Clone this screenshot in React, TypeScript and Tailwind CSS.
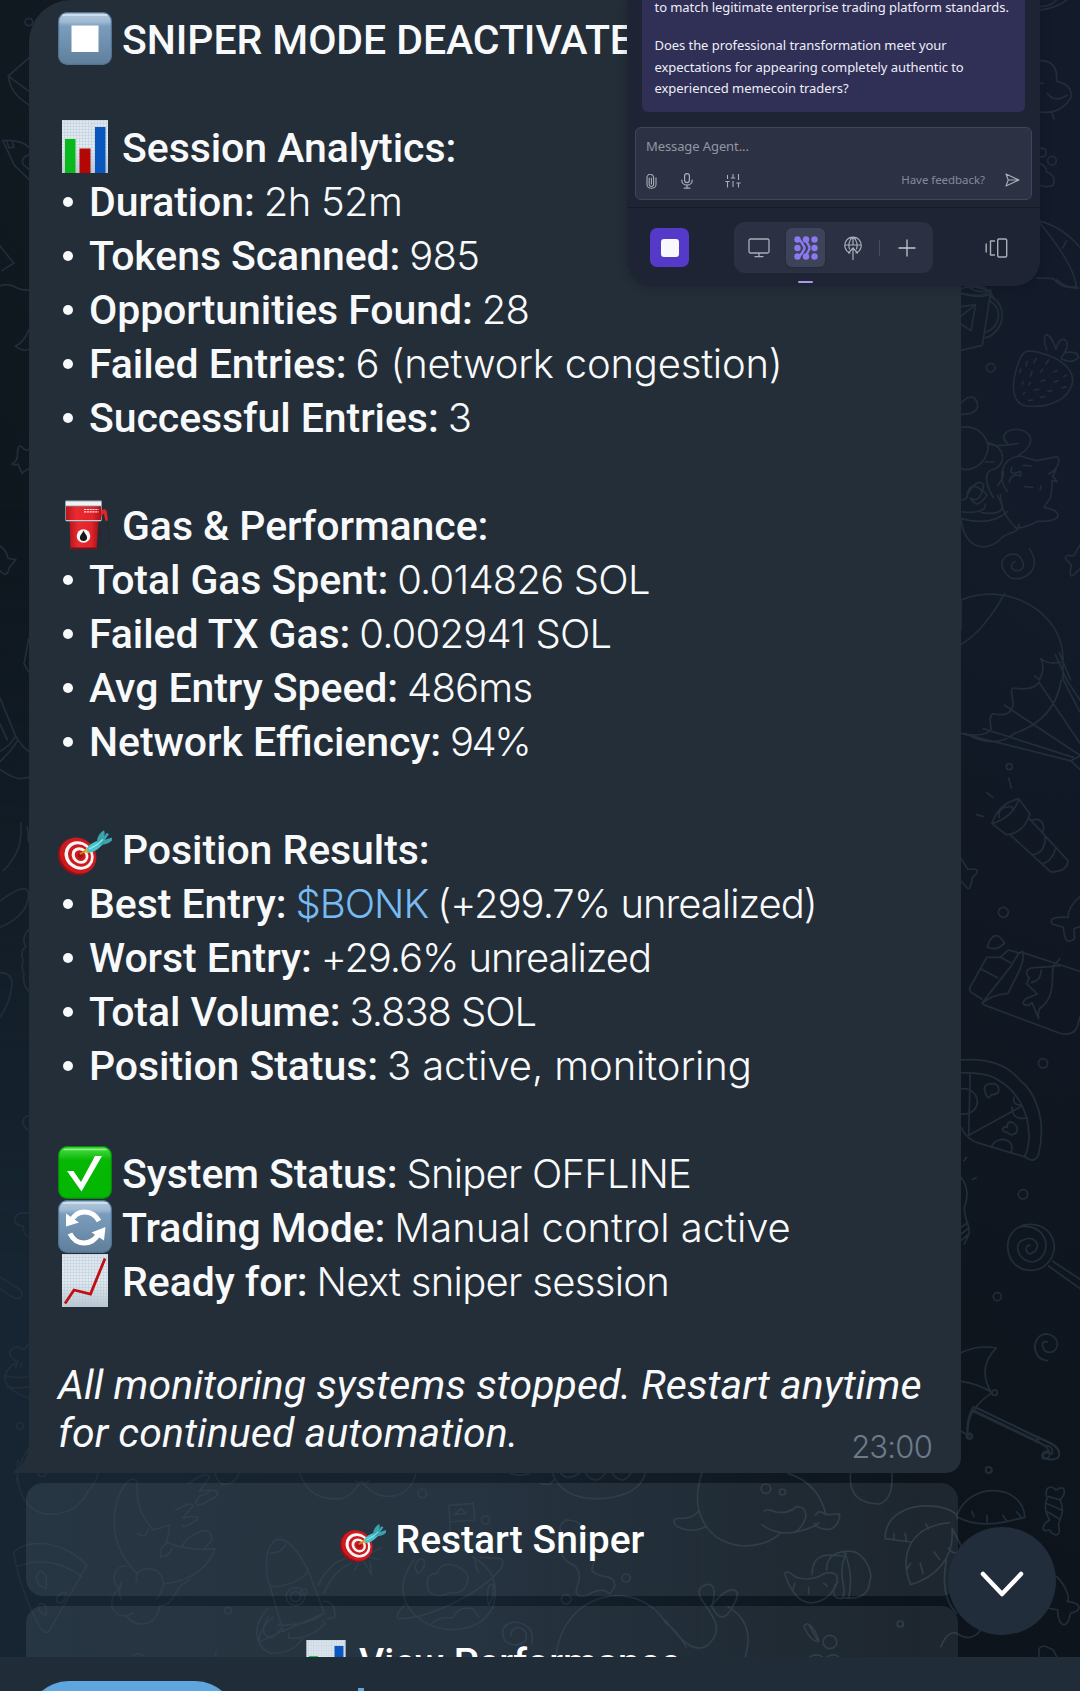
import React from "react";

type Emoji = "stop" | "bars" | "fuel" | "dart" | "check" | "cycle" | "trend";

function EmojiIcon({ kind, className }: { kind: Emoji; className: string }) {
  return (
    <svg viewBox="0 0 54 53" preserveAspectRatio="none" className={className}>
      <defs>
        <linearGradient id="keyBlue" x1="0" y1="0" x2="0" y2="1">
          <stop offset="0" stopColor="#b4cadd" />
          <stop offset="0.18" stopColor="#9db9d2" />
          <stop offset="0.26" stopColor="#7b9dbd" />
          <stop offset="1" stopColor="#5f7f9b" />
        </linearGradient>
        <linearGradient id="keyGreen" x1="0" y1="0" x2="0" y2="1">
          <stop offset="0" stopColor="#4fdf4a" />
          <stop offset="0.18" stopColor="#1fc51c" />
          <stop offset="0.26" stopColor="#06b804" />
          <stop offset="1" stopColor="#02b602" />
        </linearGradient>
        <linearGradient id="paper" x1="0" y1="0" x2="0" y2="1">
          <stop offset="0" stopColor="#dde6ee" />
          <stop offset="0.5" stopColor="#e3eaf1" />
          <stop offset="1" stopColor="#bcc8d2" />
        </linearGradient>
        <pattern id="paperGrid" width="3" height="3" patternUnits="userSpaceOnUse">
          <path d="M0 .5h3M.5 0v3" stroke="#b4c6d6" strokeWidth=".4" />
        </pattern>
        <linearGradient id="pump" x1="0" y1="0" x2="1" y2="0">
          <stop offset="0" stopColor="#b4151c" />
          <stop offset="0.3" stopColor="#ea2a31" />
          <stop offset="0.75" stopColor="#e3232a" />
          <stop offset="1" stopColor="#a91118" />
        </linearGradient>
      </defs>
      {kind === "stop" && (
        <>
          <rect x=".6" y=".6" width="52.8" height="51.8" rx="8.5" fill="url(#keyBlue)" stroke="#4f7393" strokeWidth="1.2" />
          <path d="M5 3h44" stroke="#d6e3ee" strokeWidth="1.5" strokeLinecap="round" />
          <rect x="13.5" y="13.5" width="27" height="26.5" fill="#fff" />
        </>
      )}
      {kind === "check" && (
        <>
          <rect x=".6" y=".6" width="52.8" height="51.8" rx="8.5" fill="url(#keyGreen)" stroke="#078a0a" strokeWidth="1.2" />
          <path d="M6 3.5h42" stroke="#8ff088" strokeWidth="1.4" strokeLinecap="round" />
          <path d="M9 25h6.500l7.500 11 14-26h7L23.500 45.500z" fill="#fff" />
        </>
      )}
      {kind === "cycle" && (
        <>
          <rect x=".6" y=".6" width="52.8" height="51.8" rx="8.5" fill="url(#keyBlue)" stroke="#4f7393" strokeWidth="1.2" />
          <path d="M5 3h44" stroke="#d6e3ee" strokeWidth="1.5" strokeLinecap="round" />
          <path d="M13.500 20.500C19 9 34.500 9 41 21M12 33.500C18 46 34 46.500 41 33" fill="none" stroke="#fff" strokeWidth="5" />
          <path d="M8 13.500v13l13-4zM47.500 27l-14 5.500 12.500 8z" fill="#fff" />
        </>
      )}
      {kind === "bars" && (
        <>
          <rect x="4" y="0" width="46" height="53" fill="url(#paper)" />
          <rect x="4" y="0" width="46" height="53" fill="url(#paperGrid)" />
          <rect x="7" y="19" width="10.500" height="34" fill="#08b91b" />
          <rect x="21.500" y="28.500" width="11" height="24.500" fill="#b50606" />
          <rect x="37" y="7" width="10.500" height="46" fill="#0757be" />
        </>
      )}
      {kind === "trend" && (
        <>
          <rect x="4" y="0" width="46" height="53" fill="url(#paper)" />
          <rect x="4" y="0" width="46" height="53" fill="url(#paperGrid)" />
          <path d="M7 49.500 16 36l16.500 4L47 4.500" fill="none" stroke="#bf0f12" strokeWidth="2.800" />
        </>
      )}
      {kind === "fuel" && (
        <>
          <path d="M11.500 22h29l-2 30h-26z" fill="url(#pump)" />
          <path d="M12.500 49.500h26.200l-.2 2.500h-26z" fill="#5f1a20" />
          <rect x="7.500" y="3" width="36" height="20" rx="1" fill="url(#pump)" stroke="#8b959e" strokeWidth=".9" />
          <path d="M7.500 3h36v5h-36z" fill="#eef2f4" stroke="#8b959e" strokeWidth=".8" />
          <path d="M8 22.500h35" stroke="#c3c9cd" strokeWidth="1" />
          <path d="M26 11.500h14.500M26 13.800h14.500" stroke="#fbdcdc" strokeWidth="1.200" strokeDasharray="2.200 .6" />
          <path d="M43 13c3-3 5.500-2 6 1.500l.8 8-2.300.5-1.700-7.500L43 19z" fill="#e3232a" />
          <path d="M43.500 23c-2 8-.8 17-.3 21 .6 4 7.500 4 8-2 .4-6-1.500-13-2.400-18" fill="none" stroke="#2b2428" strokeWidth=".9" />
          <circle cx="25.500" cy="38" r="6.800" fill="#f7f7f7" />
          <path d="M25.500 32.500c1 3 3.600 4.600 3.600 7.100a3.600 3.400 0 0 1-7.200 0c0-2.500 2.600-4.100 3.600-7.100z" fill="#15171a" />
        </>
      )}
      {kind === "dart" && (
        <>
          <g transform="rotate(40 19 34)">
            <ellipse cx="19" cy="35" rx="19.500" ry="17.500" fill="#8e1116" />
            <ellipse cx="19.500" cy="33" rx="19.200" ry="17" fill="#cd1a20" />
            <ellipse cx="20.300" cy="32.300" rx="15.300" ry="13.500" fill="#f8f5f5" />
            <ellipse cx="20.600" cy="32" rx="12" ry="10.600" fill="#cd1a20" />
            <ellipse cx="21" cy="31.700" rx="8.900" ry="7.800" fill="#f8f5f5" />
            <ellipse cx="21.200" cy="31.600" rx="5.800" ry="5" fill="#cd1a20" />
            <ellipse cx="21.200" cy="31.600" rx="2.800" ry="2.400" fill="#a21217" />
          </g>
          <g transform="translate(0 7.500) scale(1 .9)">
            <path d="M22.500 27 30 22" stroke="#c8871c" strokeWidth="2" strokeLinecap="round" />
            <path d="M28.500 20c-1.500 2.500-1.500 4.500-1 6 3 .3 5-.5 6-1.500z" fill="#e6b422" />
            <path d="M29 21c1-4 7-7 12-9l4 4c-4 5-9 9.500-13.500 9.500-2 0-3-2-2.500-4.500z" fill="#46c3cd" />
            <path d="M39 14C39 8 42 3.500 46 .8c1 2.500.8 5 .2 7l2.300-4c1 .3 2 .6 2.500 1.500l-4 6 6.500-2.500c.6 1 .6 2.200.5 3.500-4 4-8.500 5-13 4.500z" fill="#3aa3ab" />
            <path d="M31 22c4-2 9-5 14-11" stroke="#8fe6ea" strokeWidth="1.300" fill="none" />
          </g>
        </>
      )}
    </svg>
  );
}

function Wallpaper() {
  return (
    <div className="absolute inset-0 bg-[linear-gradient(90deg,#101820_0%,#131c28_50%,#131a29_100%)]">
      <div className="absolute inset-0 bg-[linear-gradient(200deg,rgba(13,20,27,0)_25%,rgba(13,20,27,1)_75%)]" />
      <div className="absolute inset-0 bg-[linear-gradient(90deg,#172532_0%,#16222e_45%,rgba(13,20,27,0)_85%)] [mask-image:linear-gradient(180deg,transparent_30%,black_75%)]" />
      <svg width="1080" height="1691" viewBox="0 0 1080 1691" className="absolute inset-0 fill-none stroke-[#212e3a] [&_circle]:[vector-effect:non-scaling-stroke] [&_path]:[vector-effect:non-scaling-stroke]" strokeWidth="1.7" strokeLinecap="round" strokeLinejoin="round">
        <g transform="scale(.3444 .3333)">
          <circle cx="84" cy="66" r="11" />
          <path d="M84 174 24 228q6 54 60 86M24 228l60 46M8 422q50-5 76 20M8 422l34 74 42 42M84 464q-26 10-16 30l16 14M0 738l40 52-34 22M0 858q24-10 50 6 18 8 34 6M20 424l6 20 14-2-4-16" />
        </g>
        <g transform="translate(0 270) scale(.3333 .5676)">
          <path d="M46 134q26-6 40-28M46 134q20 10 40 6M36 342q14-6 16-12 0-26 14-18 10 8 20 4M36 342q14 2 18 0l12 16 20-8M0 486q20 8 24 22l24 2-20 14q-6 20-28 6M86 650 72 694l14 14M0 754l46 66q20 20 40 28M0 800l22 28M0 848q30-10 46-26M0 866q30-16 52-36M0 880q40 16 60 16l26-2M62 974q10 50-52 84M82 982l4 26M0 1112q86-38 86-10-4 36-86 56M86 1162q-24 16-8 30-20 8-8 24-8 12 2 24-6 18 14 30M0 1238q36 0 36 20-4 32-36 58M86 1490q-26 4-12 20l12 6" />
        </g>
        <g transform="translate(0 1130) scale(.3444 .3333)">
          <path d="M84 250q-40-6-42 20 4 18 26 18-2 28 16 32M0 442l60 38q10 18-6 26-16 0-54-30M84 640l-14 20q-24-20-42 4-2 20 24 32-40 20-38 54 14 36 70 54M18 738q40 10 66 0M20 770q34 8 64 0M50 700l-4 12M64 698l-4 12M84 954q-30 40-36 100" />
          <circle cx="58" cy="888" r="10" />
        </g>
        <g transform="translate(0 1460) scale(.3444 .3333)">
          <path d="M52 0q-12 130 70 160 90 14 130-60 40-50 30-70M108 34q2 16 14 16t14-16M332 200c-4-60 20-128 48-142 20-4 20 10 18 26 0 50 10 80 46 126l50-16-10 54 36 12q60 12 104 6-30 90-148 106M398 340q-60-60-66-140M400 220q20 20 30-12M484 248l-18 20v24q30-6 34-28M528 262q10-30 60-50 30 0 26 30l-20 22M398 366c-20-50 80-60 76 10-4 20-8 28-18 40M366 318c-40 0-44 50-20 66-40 40-20 86 20 84 30 40 90 30 98-30 30 0 40-30 60-60l26-18M352 368q-10 30 0 50M372 466l14-6M548 70c40-30 60-30 60-16l-30 40c60-12 70 10 30 26-40 30-50 10-30-10l30-14M510 150q50-30 50-10l-30 34q60-10 40 6-40 30-40 14M624 40q10 40 40 32 20-8 30-32M40 278q20-30 90-28 80 16 122 66L150 500q-10 30-30 8Q60 400 40 278zM48 320q100-40 190 30M106 350q10-30 28 0v36q-28-10-28-36zM164 426q0-30 28-28-4 40-28 28zM110 440q10-20 24 0v24q-20-4-24-24z" />
          <path d="M776 350q-10-90 26-110 40-14 92 90l48 130-120 54zM786 278q30 4 44-26M784 380q70 0 110-44M806 496q90 0 132-34M818 514q-40 20-60 30l-6-8q10-40 40-64M838 520v14q60 6 106-44l-8-10M940 424q36 0 32 48l-20 4M780 444c-60 60-30 130 10 136q60 0 88-44M780 470q-30 50 0 60l10 4 28-30M924 376q30-70 90-84M940 400q30-70 80-90M870 40c20 60 60 80 120 76 30-4 50-40 60-52 40 60 120 60 150 0l8-24M1032 64q20 10 40 0M1304 136l70-6 4 50-72 6M1304 136l4 100M1320 164l18-18 16 14zM1202 300q-60 80-10 150c60 80 200 80 240-10 20-80-10-120-60-150M1240 370q0-30 30-30 10-40 60-20 40 20 24 54-10 30-50 24-30 20-60-4zM1204 320q10-30 28-20 4 30-20 40zM1380 294q0 30 10 44M1180 430q-40 40-20 46 80 0 200-70 120-80 96-110l-60-4M1420 376q-10 40 0 60l12-30v-34zM1254 490q20-20 60-16 20-40 60-26l16 24M1000 270q20-50 60-50M1110 262l-50 26 40 10M1030 330l10-20q10-20 20 0l20 36-6-40" />
          <path d="M1544 552q10-60-50-66-50 10-28 56 30 26 60 0 10-34-24-40-20 4-18 26M1480 40l26 6 30-4M388 586q14-10 28 2M624 586l4-6" />
          <circle cx="1226" cy="100" r="13" /><circle cx="1410" cy="180" r="12" /><circle cx="662" cy="452" r="10" />
          <circle cx="858" cy="410" r="27" /><circle cx="858" cy="410" r="15" /><circle cx="882" cy="396" r="9" />
        </g>
        <g transform="translate(540 1400) scale(.3444 .3333)">
          <path d="M36 220q30 80 140 76 110-6 130-76M60 220q20 24 54 0M132 220q28 40 58 0M210 220q28 40 54 0M0 250q30 10 40-10M470 220c-40 120 20 210 120 218q70 0 110-40M720 220q90 30 110 124M460 334q-20 26-60 20-20 6-4 24 40 24 86 2M650 334q10-10 34 2 40 6 60-16 30 0 28 30-8 30-30 46M644 374q40 30 86 24 60-10 80-30M800 346q10-20 30-2l40-2q0 36-30 46-30 2-44-18M902 220q-10 90 84 92 40-14 36-92M66 400q-20-20 10-40 50 0 50 40l30 14M60 440q0 40 40 56 20 20 12 50-20 50 20 42 50-30 70-6 30-30 0-50-60-10-50-30l10-30M46 770c20-200 240-240 320-100q30 20 58 70M364 660q90 130 136 60c50-60-70-130-30-160 40-24 40 20 30 56 50-70 90-50 66-10-40 90-60 20-70 10M546 620q80 50 50 150M710 520q10-10 30 10 30 14 70 0 30-20 50-6 14 30-30 70-80 50-120-74M790 524c0-70 50-60 90-56M832 510c0-50 40-54 56-56 60-10 80 80 70 84 0 60-50 60-80 54M888 460c-30 70 10 110-12 136-40 0-20-50-10-50M882 456q30 60 14 140M740 550l-6 20M780 562v20M824 550l10 8" />
          <path d="M1002 416c0-130 210-110 210-60M1002 416l76 10M1190 368c-110 10-150 90-114 186 70-20 130-80 120-170l30 60q-20 30-40 0M1120 372l8 14M1060 400l4 24M1028 400v16M1076 490l-12 20M1104 490l8 30M1144 456l16 22M1212 342c40-100 190-90 196 10l-50 12q-90 20-144-12M1254 334l6 16M1298 346v20M1344 346l10 16M1384 336l12 14M1180 480q-20 110 30 160M1164 740q20-50 46-40 40 30 70-10M1500 530c30 30 40 70 30 74 50 6 40 30 10 36-10 60-40 30-36-10l-30-6M1450 770q-10-50 40-20l10 20M1256 24q-20 40-14 80M1258 20l220 106q40 20 26 46-20 16-44 0 0-20 26-10 8-24-22-26L1256 34M1440 126l6-14M1472 296c-10-40 16-40 26-26 30-20 30 10 12 30 20 40-10 70-4 76 10 50-30 20-26 14-30 10-20-20 0-30-20-30-10-60-8-64zM1476 290l36 10M1470 310l44 20M1470 334l40 24M766 680q10-20 30 10 20 40 10 34-20 0-40-44zM780 674l24 44M784 770q20-10 36 0M834 770q20-10 32 0" />
          <circle cx="656" cy="266" r="14" /><circle cx="704" cy="276" r="9" /><circle cx="250" cy="534" r="12" /><circle cx="76" cy="598" r="14" />
          <circle cx="842" cy="726" r="20" /><circle cx="1046" cy="672" r="9" /><circle cx="1303" cy="210" r="9" /><circle cx="1246" cy="108" r="8" />
        </g>
        <g transform="translate(620) scale(.3333)">
          <path d="M1260 30q50-6 80-30M1260 20q30 0 50-20M1260 182q50 0 50 50v12q50 10 42 50-30 50-92 42M1282 280q20 30 60 6M1296 338l6 18M1260 250h10M1260 446q20-6 18 16-2 10-18 8M1260 490q20 10 20 26 30 10 20 40-20 8-40 0M1262 664q70 20 118 78M1260 670q100 120 110 190-40 10-70-24l-50-2M1340 722l-12 22M1024 866c30-14 70-10 86 10l14 22M1024 880q60 20 90 0M1040 860q40 0 70 16" />
          <circle cx="1296" cy="482" r="13" />
        </g>
        <g transform="translate(940 280) scale(.3333)">
          <path d="M63 40q70 16 90-10l-26 166-64 15M63 80l44-6-14 78-30-20M63 108l44-34M84 20q30 24 68 10M150 48c60 30 40 110-14 126M150 64c40 20 30 80-12 92M63 370q20-26 40-16 24 30-10 46l-30 4M63 442c60-10 80 40 82 62-10 60-60 70-82 62M145 488c50 10 60 66 10 82-30 10-10 60 6 84M136 546h26M146 492q20 10 90-2M202 490c-40-40 50-60 68-20q10 30-34 56M202 634c-30-40-20-100 38-106l50 14 50-10q20-6 16 14-2 20-30 36l22-12-10 20 14 14-16-2v22l-4 28-20 30q50 10 40 30-10 14-60 12-40 22-64 20-50-50-46-100M174 616q20-30 16-40M216 562q-10 20 8 18l18-6v14q-30-10-34 20M250 556l24 2M254 620l24 2M300 630l4-12M63 716q90 24 140-22M63 716c10 90 70 100 114 66 20-30 60-16 60-50M68 696q70 6 68-24M124 698q70 10 62-26l-14-26M63 660q20 0 20-18 30-50 48-28-10 60-40 40 20 40 50-10-50-50-60 0M268 806c40 60-10 100-56 88-50-40-20-80 20-70 30 26 20 50-6 48-20-10-10-24 0-28M420 796l-20 32q-30-6-22 10l16 16q-10 50 12 26l14-14M63 960c140-60 310 40 306 180v60M194 940q-60 110-131 154M284 1188l14 12q20-40 4-64 26 20 60 10M346 1124l34 76M358 1118l34 82M63 960v90" />
          <path d="M350 0q30 26 66 24" />
          <circle cx="152" cy="263" r="13" />
          <path d="M260 214c40-4 140 30 138 90-10 60-80 80-140 74-50-10-40-80-26-120q10-36 28-44zM320 210c-20-60 10-60 28-2 10-50 50-30 26 10l-10 16M374 218q40-6 42 14-20 20-50 6M262 244l-4 14M288 236l-6 12M326 240l-8 12M242 268l-2 10M276 274l-4 14M308 268l-6 8M352 272l-12 4M248 304v8M272 308l-6 6M314 300l-10 4M354 302l-12 4M378 286l-6 4M254 338l-4 4M296 328l-14 2M336 332l-12 2M378 320l-12 4M278 360l-12 2M314 350l-12 2" />
        </g>
        <g transform="translate(940 680) scale(.3333)">
          <path d="M63 160 390 242M74 160q90 50 150 0 120-40 140-160M76 162q60 10 78-14-10-50 10-46 50 10 56-30-10-50 0-48 60 10 78-18M130 146l270 86M194 76l226 150M298 8 420 190M370 0l50 96M380 0l40 60M392 242l28-14M394 244l26 24M206 294l8 30M140 338l18 14M110 404l20 6M156 430q20-60 80-74l34 46q-20 60-72 62zM160 430q60-20 76-72M178 412c-10-30 40-40 40-26M210 464l122 112q50 0 52-34L268 416M276 420c30-10 40 20 32 36M316 468q0 50-36 56M346 508q-10 36-36 42M63 536q14 20 20 32 50-6 14 24-6 50-20 26l-14-14M420 650q-36 30-36 62-60-4-48 20l34 10q4 60 34 34l-2-30 18-6M142 802q10-40 34-34l18 20q-20 26-52 14zM140 832l-52 94 4 10 34 22M140 832h40l26-22 34 10M182 832l30 16M124 868l50 26M126 970l34-44 52-66 24-40 12-6M126 970q30-26 78-30l30-60q20-40 14-60M130 974l230 86q40 10 52-20l8-30M248 818l172 56M358 858l-84 6q-26 10-6 30l-8 18 32 30-34 14q-20 20 8 20l10-8 20 48q-4-30 10-36c50-40 20-120 40-130q10-8 14-14M274 908q30-6 30-38M63 1140q120-10 176 60M63 1178q80 0 112 22M90 1178v22" />
          <circle cx="208" cy="260" r="9" /><circle cx="190" cy="697" r="15" /><circle cx="309" cy="1150" r="14" />
        </g>
        <g transform="translate(940 1080) scale(.3333)">
          <path d="M90 0l-4 166 160-88M63 142q20 40 56 48l140 42q20 20 36-6c30-120-20-200-56-226M174 0c90 50 110 170 80 230M63 26c60-6 70 80 0 76M246 76q-30 0-24-24M216 82q0 40 46 32M156 196c20-30 70-20 58 18M140 14q30-10 36 10 4 20-22 20-10 20-18-6-6-20 4-24zM202 132c10-14 30 0 30 20-10 20-30 10-28 6-30-4-10-24-2-16zM72 242l8-10M98 298l10-4M63 292q30 40 10 90c0 40 20 60 14 80l-14 30M63 442l20-14M63 462l24-18M63 482l24-20M338 544l82 54M326 558l94 68M203 500c0-90 140-90 140 4-10 90-136 90-140-4zM240 440c90-10 100 90 40 106-50 0-60-60-30-66 40-20 60 30 20 42-20-8-10-30 0-26M322 842c-50-4-50-80 0-80 50 10 30 70-6 52-20-30 0-30 6-28M63 818q50-24 106-14-60 60-14 136M63 904q50 6 94 34-80 50-74 130M63 1054l26 14M100 990l190 92q50 26 36 50-14 10-20 0M108 982l186 92q80 30 60 60-30 10-48-6 0-16 20-14M292 1084l6-12" />
          <circle cx="249" cy="343" r="14" /><circle cx="172" cy="650" r="12" /><circle cx="164" cy="938" r="8" /><circle cx="89" cy="1069" r="8" /><circle cx="146" cy="1170" r="9" />
        </g>
      </svg>
    </div>
  );
}

type Line = null | { icon?: Emoji; label: string; link?: string; value?: string; tracking?: string };

const report: Line[] = [
  { icon: "stop", label: "SNIPER MODE DEACTIVATED" },
  null,
  { icon: "bars", label: "Session Analytics:" },
  { label: "Duration:", value: "2h 52m", tracking: "tracking-[-0.7px]" },
  { label: "Tokens Scanned:", value: "985", tracking: "tracking-[-0.8px]" },
  { label: "Opportunities Found:", value: "28", tracking: "tracking-[-0.8px]" },
  { label: "Failed Entries:", value: "6 (network congestion)", tracking: "tracking-[-0.2px]" },
  { label: "Successful Entries:", value: "3", tracking: "tracking-[-0.5px]" },
  null,
  { icon: "fuel", label: "Gas & Performance:" },
  { label: "Total Gas Spent:", value: "0.014826 SOL", tracking: "tracking-[-0.8px]" },
  { label: "Failed TX Gas:", value: "0.002941 SOL", tracking: "tracking-[-0.8px]" },
  { label: "Avg Entry Speed:", value: "486ms", tracking: "tracking-[-0.8px]" },
  { label: "Network Efficiency:", value: "94%", tracking: "tracking-[-2.5px]" },
  null,
  { icon: "dart", label: "Position Results:" },
  { label: "Best Entry:", link: "$BONK", value: "(+299.7% unrealized)", tracking: "tracking-[-1px]" },
  { label: "Worst Entry:", value: "+29.6% unrealized", tracking: "tracking-[-1.1px]" },
  { label: "Total Volume:", value: "3.838 SOL", tracking: "tracking-[-1.1px]" },
  { label: "Position Status:", value: "3 active, monitoring", tracking: "tracking-[-0.1px]" },
  null,
  { icon: "check", label: "System Status:", value: "Sniper OFFLINE", tracking: "tracking-[-0.8px]" },
  { icon: "cycle", label: "Trading Mode:", value: "Manual control active", tracking: "tracking-[-0.05px]" },
  { icon: "trend", label: "Ready for:", value: "Next sniper session", tracking: "tracking-[-0.7px]" },
  null,
];

function ReportLine({ line }: { line: Line }) {
  if (!line) return <div className="h-[54px]" />;
  return (
    <div className="flex h-[54px] items-center whitespace-pre">
      {line.icon ? (
        <EmojiIcon kind={line.icon} className="-mt-[3px] mr-[10px] h-[53px] w-[54px] shrink-0" />
      ) : (
        <span className="mr-[16px] ml-[5px] size-[10px] shrink-0 rounded-full bg-[#f8f9fa]" />
      )}
      <span className="text-[41px] leading-[54px] font-medium tracking-[-0.07px] [font-feature-settings:'liga'_1]">{line.label}</span>
      {line.link && (
        <span className="ml-[9px] font-['Inter',sans-serif] text-[40px] leading-[54px] font-light tracking-[-1px] text-[#77bbf2]">{line.link}</span>
      )}
      {line.value && (
        <span className={"ml-[9px] font-['Inter',sans-serif] text-[40px] leading-[54px] font-light " + line.tracking}>{line.value}</span>
      )}
    </div>
  );
}

function MessageBubble() {
  return (
    <div className="relative ml-[29px] h-[1473px] w-[932px] shrink-0 rounded-tl-[42px] rounded-br-[15px] bg-[#232e39] px-[29px] pt-[13px]">
      <svg width="16" height="24" viewBox="0 0 16 24" className="absolute bottom-0 -left-[15px]">
        <path d="M16 0v24H1c-1.500 0-1.500-2 0-3C8 17 13 10 14 0z" fill="#232e39" />
      </svg>
      {report.map((line, i) => (
        <ReportLine key={i} line={line} />
      ))}
      <p className="-mt-[2px] text-[41px] leading-[48px] tracking-[0.06px] whitespace-nowrap italic">
        All monitoring systems stopped. Restart anytime
      </p>
      <div className="flex items-start justify-between">
        <p className="text-[41px] leading-[48px] tracking-[0.06px] whitespace-nowrap italic">for continued automation.</p>
        <span className="mt-[18px] font-['Inter',sans-serif] text-[31px] leading-[40px] font-light tracking-[-0.8px] text-[#6d7b89]">23:00</span>
      </div>
    </div>
  );
}

function ActionButton({ icon, label }: { icon: Emoji; label: string }) {
  return (
    <div className="flex h-[113px] shrink-0 items-center justify-center gap-[10px] rounded-[17px] bg-[#93a7b8]/13">
      <EmojiIcon kind={icon} className="h-[45px] w-[46px]" />
      <span className="text-[39px] leading-[46px] font-medium text-white">{label}</span>
    </div>
  );
}

const gray = "fill-none stroke-[#a9aeb8]";

function AgentPanel() {
  return (
    <div className="absolute top-0 left-[627px] flex h-[286px] w-[413px] flex-col overflow-hidden rounded-b-[26px] bg-[#1e2433] font-['Noto_Sans',sans-serif] shadow-[0_2px_10px_rgba(10,14,22,0.25)]">
      <div className="mr-[15px] ml-[15px] h-[112px] shrink-0 rounded-b-[6px] bg-[#302f56] pl-[12.500px] text-[13px] leading-[21.8px] tracking-[-0.06px] whitespace-nowrap text-[#eeeef6]">
        <p className="-mt-[3px]">to match legitimate enterprise trading platform standards.</p>
        <p className="mt-[16px]">
          Does the professional transformation meet your
          <br />
          expectations for appearing completely authentic to
          <br />
          experienced memecoin traders?
        </p>
      </div>
      <div className="mx-2 mt-[15px] flex h-[73px] shrink-0 flex-col justify-between rounded-[6px] border border-[#40455a] bg-[#2c3144] px-[10px] pt-[8px] pb-[8px]">
        <p className="text-[13px] leading-5 tracking-[-0.1px] text-[#9297a2]">Message Agent...</p>
        <div className="flex h-[20px] items-center">
          <svg width="11" height="15" viewBox="0 0 11 15" className={gray} strokeWidth="1.100" strokeLinecap="round">
            <path d="M3.200 4v6.300a2.200 2.200 0 0 0 4.400 0V3.600a3.300 3.300 0 0 0-6.600 0v6.900c0 5 9 5 9 0V3.800M5.400 4v6" />
          </svg>
          <svg width="12" height="16" viewBox="0 0 12 16" className={gray + " ml-[24px]"} strokeWidth="1.200" strokeLinecap="round">
            <rect x="3.600" y=".7" width="4.800" height="9" rx="2.400" />
            <path d="M.8 7.200c.2 6.500 10.200 6.500 10.400 0M6 12.200V15M3.200 15.200h5.600" />
          </svg>
          <svg width="16" height="14" viewBox="0 0 16 14" className={gray + " ml-[32px]"} strokeWidth="1.100">
            <path d="M2.500 1v4M.3 7.500h4.400M2.500 7.500v6M8 0v4M5.800 4h4.400M8 7v6M13.500 0v6M13.500 9v4.500M11.300 9h4.400" />
          </svg>
          <span className="ml-auto -translate-y-px text-[11.5px] leading-4 tracking-[-0.05px] text-[#868b99]">Have feedback?</span>
          <svg width="15" height="14" viewBox="0 0 15 14" className={gray + " mr-[1px] ml-[20px] -translate-y-px"} strokeWidth="1.100" strokeLinejoin="round">
            <path d="M1 1l13 6L1 13l2.200-6zM3.200 7H14" />
          </svg>
        </div>
      </div>
      <div className="mt-[7px] h-px w-full shrink-0 bg-[#161b26]" />
      <div className="flex h-[79px] shrink-0 items-center pr-[32px] pl-[23px]">
        <div className="flex size-[39px] items-center justify-center rounded-[7px] bg-[#5539c9]">
          <div className="size-[18px] rounded-[3px] bg-[#f8f9fd]" />
        </div>
        <div className="ml-[45px] flex h-[51px] w-[199px] items-center rounded-[11px] bg-[#2b3043] pl-[14px]">
          <svg width="22" height="20" viewBox="0 0 22 20" className={gray} strokeWidth="1.300" strokeLinejoin="round">
            <rect x="1" y="1" width="20" height="14" rx="1.500" />
            <path d="M11 15v3.500M6.500 18.700h9" />
          </svg>
          <div className="ml-[16px] flex size-[39px] items-center justify-center rounded-[6px] bg-[#3d4359] shadow">
            <svg width="24" height="24" viewBox="0 0 24 24" className="fill-[#8c79f2] stroke-[#8c79f2]" strokeWidth="0">
              <circle cx="3.500" cy="3.500" r="3.200" /><circle cx="12" cy="3.500" r="3.200" /><circle cx="20.500" cy="3.500" r="3.200" />
              <circle cx="3.500" cy="12" r="3.200" /><circle cx="20.500" cy="12" r="3.200" />
              <circle cx="3.500" cy="20.500" r="3.200" /><circle cx="12" cy="20.500" r="3.200" /><circle cx="20.500" cy="20.500" r="3.200" />
              <path d="M12 3.500c0 4 3.500 5 3.500 8.500s-3.500 4.500-3.500 8.500M3.500 20.500c4.500-.5 4.500-4 6-6 1.200-1.500 1.200-3.500 0-5-1.500-2-1.500-5.500-6-6" fill="none" strokeWidth="2.400" />
            </svg>
          </div>
          <svg width="18" height="24" viewBox="0 0 18 24" className={gray + " ml-[18.500px]"} strokeWidth="1.200" strokeLinecap="round">
            <path d="M6 17A8.200 8.200 0 1 1 12 17M1 9h16M9 1C4.500 4 4.500 10 5.500 13M9 1c4.500 3 4.500 9 3.500 12M9 12v11.500M4.500 17 9 12l4.500 5M9 1v8" />
          </svg>
          <div className="ml-[17px] h-[16px] w-px bg-[#454b60]" />
          <svg width="18" height="18" viewBox="0 0 18 18" className="ml-[18px] fill-none stroke-[#c3c7cf]" strokeWidth="1.300">
            <path d="M9 .5v17M.5 9h17" />
          </svg>
        </div>
        <svg width="23" height="20" viewBox="0 0 23 20" className={gray + " ml-auto"} strokeWidth="1.400" strokeLinejoin="round">
          <rect x="12.700" y="1" width="9" height="18" rx="1.200" />
          <path d="M10 3H5.500v14H10M1.200 5.500v9" />
        </svg>
      </div>
      <div className="-mt-[6px] ml-[171px] h-[2px] w-[15px] shrink-0 rounded-full bg-[#a89ae8]" />
    </div>
  );
}

export default function App() {
  return (
    <div className="relative h-[1691px] w-[1080px] overflow-hidden font-['Roboto',sans-serif] text-[#f8f9fa]">
      <Wallpaper />
      <div className="relative flex h-[1657px] flex-col overflow-hidden">
        <MessageBubble />
        <div className="mt-[10px] ml-[26px] flex w-[932px] shrink-0 flex-col gap-[10px]">
          <ActionButton icon="dart" label="Restart Sniper" />
          <ActionButton icon="bars" label="View Performance" />
        </div>
      </div>
      <div className="relative h-[34px] overflow-hidden bg-[#212c39]">
        <div className="ml-[27px] flex items-start pt-[24px]">
          <div className="h-[84px] w-[210px] rounded-[42px] bg-[#5fa5de]" />
          <div className="mt-[7px] ml-[121px] h-[50px] w-[6px] bg-[#5fa5de]" />
        </div>
      </div>
      <div className="absolute top-[1527px] left-[948px] flex size-[108px] items-center justify-center rounded-full bg-[#212d3b]">
        <svg width="44" height="28" viewBox="0 0 44 28" className="mt-[6px] fill-none stroke-white" strokeWidth="4.500" strokeLinecap="round" strokeLinejoin="round">
          <path d="M3 4l19 20L41 4" />
        </svg>
      </div>
      <AgentPanel />
    </div>
  );
}
